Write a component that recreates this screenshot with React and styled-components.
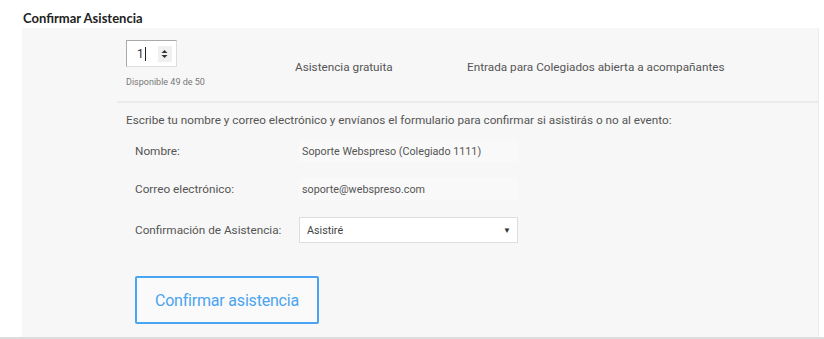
import React, { useState } from 'react'
import styled, { createGlobalStyle } from 'styled-components'

const GlobalStyle = createGlobalStyle`
  body {
    margin: 0;
    background: #fff;
    font-family: Roboto, "Liberation Sans", sans-serif;
    color: #555;
  }
`

const Page = styled.div`
  width: 824px;
  height: 339px;
  border-bottom: 2px solid #dcdcdc;
  box-sizing: border-box;
`

const Title = styled.h3`
  margin: 0;
  padding: 10px 0 0 23px;
  height: 28px;
  box-sizing: border-box;
  font-family: Lato, "Open Sans", sans-serif;
  font-size: 13px;
  font-weight: 700;
  color: #222;
`

const Panel = styled.div`
  margin-left: 22px;
  width: 797px;
  height: 309px;
  background: #f7f7f7;
  border-right: 1px solid #ececec;
  box-sizing: border-box;
`

const TicketRow = styled.div`
  display: grid;
  grid-template-columns: 169px 172px 1fr;
  align-items: start;
  padding: 12px 0 0 104px;
  height: 61px;
`

const QtyCol = styled.div`
  display: flex;
  flex-direction: column;
  gap: 10px;
`

const QtyBox = styled.div`
  width: 51px;
  height: 27px;
  box-sizing: border-box;
  background: #fff;
  border: 1px solid #ddd;
  border-top-color: #aaa;
  border-left-color: #aaa;
  display: flex;
  align-items: center;
  padding-left: 10px;
  font-size: 12px;
  color: #333;
`

const Caret = styled.span`
  display: inline-block;
  width: 1px;
  height: 14px;
  background: #222;
  margin-left: 1px;
`

const Spinner = styled.span`
  margin-left: 12px;
  width: 14px;
  height: 16px;
  background: #f0f0f0;
  display: flex;
  align-items: center;
  justify-content: center;
`

const Small = styled.div`
  font-size: 9px;
  color: #777;
`

const Cell = styled.div`
  font-size: 11.75px;
  color: #555;
  padding-top: 20px;
`

const Divider = styled.div`
  margin-left: 95px;
  border-top: 2px solid #ebebeb;
`

const Form = styled.form`
  padding: 10px 0 0 104px;
`

const Intro = styled.p`
  margin: 0 0 5px;
  font-size: 11.75px;
  line-height: 14px;
  color: #555;
`

const Field = styled.div`
  display: grid;
  grid-template-columns: 164px 219px;
  align-items: center;
  padding-left: 9px;
  height: ${p => p.$h || 38}px;
`

const Label = styled.label`
  font-size: 11.75px;
  color: #555;
`

const Value = styled.div`
  height: 22px;
  background: #f9f9f9;
  font-size: 10.75px;
  color: #555;
  display: flex;
  align-items: center;
  padding-left: 3px;
`

const Select = styled.div`
  height: 26px;
  box-sizing: border-box;
  background: #fff;
  border: 1px solid #ddd;
  font-size: 10.75px;
  color: #444;
  display: flex;
  align-items: center;
  justify-content: space-between;
  padding: 0 6px 0 7px;
`

const Arrow = styled.span`
  font-size: 8px;
  color: #333;
`

const Submit = styled.button`
  margin: 24px 0 0 9px;
  width: 184px;
  height: 48px;
  background: #fafafa;
  border: 2px solid #4ba4ef;
  border-radius: 2px;
  color: #4ba4ef;
  font-family: Roboto, "Liberation Sans", sans-serif;
  font-size: 16px;
  letter-spacing: -0.2px;
`

const App = () => {
  const [qty] = useState(1)

  return (
    <Page>
      <GlobalStyle />
      <Title>Confirmar Asistencia</Title>
      <Panel>
        <TicketRow>
          <QtyCol>
            <QtyBox>
              {qty}<Caret />
              <Spinner>
                <svg width="7" height="10" viewBox="0 0 7 10">
                  <path d="M0.5 4 L3.5 1 L6.5 4 Z M0.5 6 L3.5 9 L6.5 6 Z" fill="#333" />
                </svg>
              </Spinner>
            </QtyBox>
            <Small>Disponible 49 de 50</Small>
          </QtyCol>
          <Cell>Asistencia gratuita</Cell>
          <Cell>Entrada para Colegiados abierta a acompañantes</Cell>
        </TicketRow>
        <Divider />
        <Form onSubmit={e => e.preventDefault()}>
          <Intro>Escribe tu nombre y correo electrónico y envíanos el formulario para confirmar si asistirás o no al evento:</Intro>
          <Field>
            <Label>Nombre:</Label>
            <Value>Soporte Webspreso (Colegiado 1111)</Value>
          </Field>
          <Field>
            <Label>Correo electrónico:</Label>
            <Value>soporte@webspreso.com</Value>
          </Field>
          <Field $h={44}>
            <Label>Confirmación de Asistencia:</Label>
            <Select>
              <span>Asistiré</span>
              <Arrow>▼</Arrow>
            </Select>
          </Field>
          <Submit type="submit">Confirmar asistencia</Submit>
        </Form>
      </Panel>
    </Page>
  )
}

export default App
